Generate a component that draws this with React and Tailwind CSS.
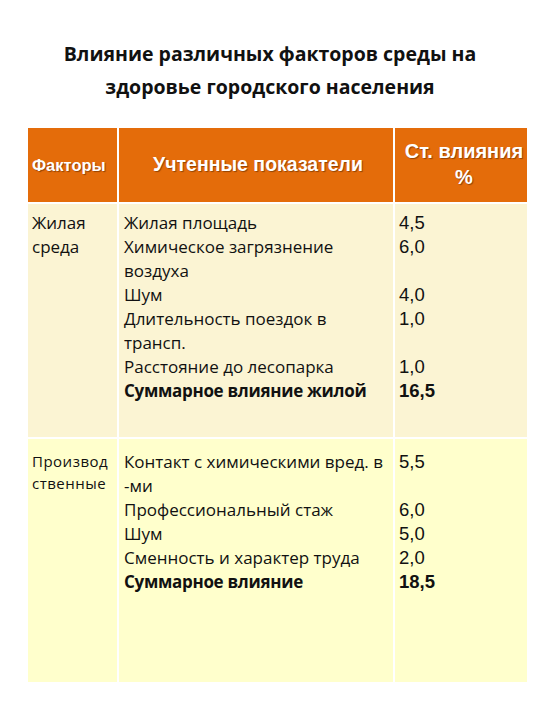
export default function App() {
  return (
    <div className="w-[540px] h-[720px] bg-white overflow-hidden text-[#111] font-['Open_Sans','Noto_Sans',sans-serif]">
      <div className="pt-[37px] text-center font-bold text-[19.5px] leading-[33px]">
        <div>Влияние различных факторов среды на</div>
        <div>здоровье городского населения</div>
      </div>
      <div className="ml-[28px] mt-[25px] w-[499px] grid grid-cols-[89px_274px_132px] grid-rows-[74px_233px_243px] gap-[2px]">
        <div className="bg-[#e46c0a] flex items-center pl-[4px] text-white font-bold text-[16.5px] font-['Liberation_Sans',Arial,sans-serif] [text-shadow:1px_1px_1px_rgba(90,40,0,0.6)]">Факторы</div>
        <div className="bg-[#e46c0a] flex items-center justify-center pl-[4px] text-white font-bold text-[19.5px] font-['Liberation_Sans',Arial,sans-serif] [text-shadow:1px_1px_1px_rgba(90,40,0,0.6)]">Учтенные показатели</div>
        <div className="bg-[#e46c0a] flex flex-col items-center justify-center pl-[6px] pb-[2px] text-white font-bold text-[20px] leading-[26px] font-['Liberation_Sans',Arial,sans-serif] [text-shadow:1px_1px_1px_rgba(90,40,0,0.6)]">
          <div>Ст. влияния</div>
          <div>%</div>
        </div>

        <div className="bg-[#fbf4d3] pt-[7px] pl-[4px] text-[17px] leading-[24px]">
          <div>Жилая</div>
          <div>среда</div>
        </div>
        <div className="bg-[#fbf4d3] pt-[7px] pl-[5px] text-[17px] leading-[24px]">
          <div>Жилая площадь</div>
          <div>Химическое загрязнение</div>
          <div>воздуха</div>
          <div>Шум</div>
          <div>Длительность поездок в</div>
          <div>трансп.</div>
          <div>Расстояние до лесопарка</div>
          <div className="font-bold tracking-[-0.3px]">Суммарное влияние жилой</div>
        </div>
        <div className="bg-[#fbf4d3] pt-[7px] pl-[4px] text-[18.5px] leading-[24px] font-['Liberation_Sans',Arial,sans-serif]">
          <div>4,5</div>
          <div>6,0</div>
          <div>&nbsp;</div>
          <div>4,0</div>
          <div>1,0</div>
          <div>&nbsp;</div>
          <div>1,0</div>
          <div className="font-bold">16,5</div>
        </div>

        <div className="bg-[#ffffcc] pt-[11px] pl-[4px] text-[15px] leading-[22px] tracking-[0.5px]">
          <div>Производ</div>
          <div>ственные</div>
        </div>
        <div className="bg-[#ffffcc] pt-[11px] pl-[5px] text-[17px] leading-[24px]">
          <div>Контакт с химическими вред. в</div>
          <div>-ми</div>
          <div>Профессиональный стаж</div>
          <div>Шум</div>
          <div>Сменность и характер труда</div>
          <div className="font-bold tracking-[-0.3px]">Суммарное влияние</div>
        </div>
        <div className="bg-[#ffffcc] pt-[11px] pl-[4px] text-[18.5px] leading-[24px] font-['Liberation_Sans',Arial,sans-serif]">
          <div>5,5</div>
          <div>&nbsp;</div>
          <div>6,0</div>
          <div>5,0</div>
          <div>2,0</div>
          <div className="font-bold">18,5</div>
        </div>
      </div>
    </div>
  );
}
